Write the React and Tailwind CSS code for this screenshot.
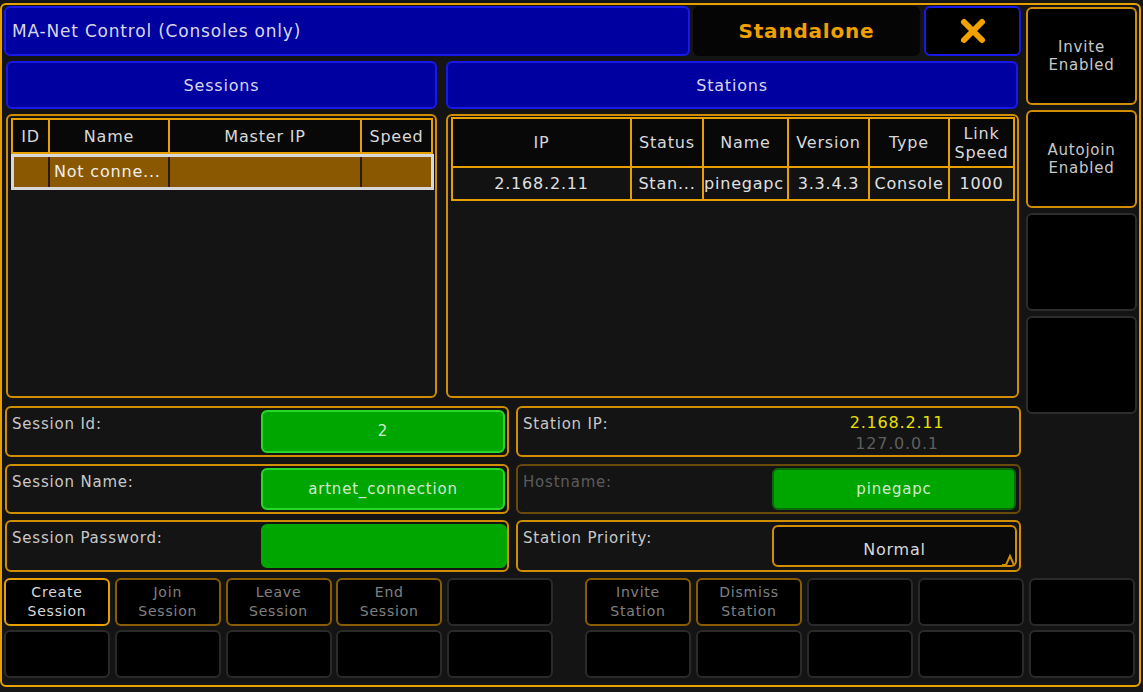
import { useState } from 'react'

const FONT = { fontFamily: '"DejaVu Sans", "Liberation Sans", sans-serif' }

// ── small building blocks ──────────────────────────────────────
function BlueBar({ children, className = '' }) {
  return (
    <div className={`bg-[#0000a0] border-2 border-[#1818e8] rounded-md flex items-center text-[#d8d8e8] text-[16px] ${className}`}>
      {children}
    </div>
  )
}

function SideButton({ lines, active }) {
  return (
    <div className={`h-[98px] rounded-md bg-black border-2 flex flex-col items-center justify-center text-[15px] leading-[18px] text-[#c8c8c8] ${active ? 'border-[#d08e00]' : 'border-[#2c2c2c]'}`}>
      {lines.map(l => <span key={l}>{l}</span>)}
    </div>
  )
}

function KeyButton({ lines, state }) {
  const border = state === 'on'  ? 'border-[#e8a000] text-[#d8d8d8]' :
                 state === 'dim' ? 'border-[#8a5c00] text-[#808080]' : 'border-[#2a2a2a]'
  return (
    <div className={`w-[106px] h-[48px] rounded-md bg-black border-2 flex flex-col items-center justify-center text-[14px] leading-[19px] ${border}`}>
      {lines && lines.map(l => <span key={l}>{l}</span>)}
    </div>
  )
}

function FieldRow({ label, dim, children, className = '' }) {
  return (
    <div className={`rounded-md border-2 bg-[#141414] flex ${dim ? 'border-[#6a4a08]' : 'border-[#d08e00]'} ${className}`}>
      <div className={`flex-1 pl-[5px] pt-[5px] text-[15px] ${dim ? 'text-[#5c5c5c]' : 'text-[#c8c8c8]'}`}>{label}</div>
      {children}
    </div>
  )
}

function GreenField({ children, variant = 'on', className = '' }) {
  const b = variant === 'on' ? 'border-[#28d828]' : variant === 'dark' ? 'border-[#0a6a0a]' : 'border-[#00a800]'
  return (
    <div className={`bg-[#00a600] border-2 ${b} rounded-md flex items-center justify-center text-[15px] text-[#d0ecd0] ${className}`}>
      {children}
    </div>
  )
}

// ── tables ──────────────────────────────────────────────────────
const HEAD = 'bg-[#080808] border-2 border-[#e8a000] flex items-center justify-center text-[#d8d8d8] text-[16px] leading-[19px] text-center'
const CELL = 'bg-[#121212] border-2 border-[#e8a000] flex items-center justify-center text-[#e0e0e0] text-[16px] whitespace-nowrap overflow-hidden'

function SessionsTable() {
  const cols = [
    { t: 'ID', w: 'w-[39px]' },
    { t: 'Name', w: 'w-[122px]' },
    { t: 'Master IP', w: 'w-[194px]' },
    { t: 'Speed', w: 'w-[73px]' },
  ]
  return (
    <div className="w-[431px] h-[284px] rounded-md border-2 border-[#d08e00] bg-[#141414] pt-[2px] pl-[3px]">
      <div className="flex h-[36px]">
        {cols.map((c, i) => (
          <div key={c.t} className={`${HEAD} ${c.w} ${i > 0 ? '-ml-[2px]' : ''}`}>{c.t}</div>
        ))}
      </div>
      <div className="w-[423px] h-[36px] border-[3px] border-[#d8d8d8] bg-[#8a5800] flex text-[16px] text-[#eeeeee]">
        <div className="w-[36px] border-r-2 border-[#2a1a00]" />
        <div className="w-[120px] border-r-2 border-[#2a1a00] pl-[4px] flex items-center">Not conne...</div>
        <div className="w-[192px] border-r-2 border-[#2a1a00]" />
        <div className="flex-1" />
      </div>
    </div>
  )
}

function StationsTable() {
  const cols = [
    { h: ['IP'], v: '2.168.2.11', w: 'w-[181px]' },
    { h: ['Status'], v: 'Stan...', w: 'w-[74px]' },
    { h: ['Name'], v: 'pinegapc', w: 'w-[87px]', left: true },
    { h: ['Version'], v: '3.3.4.3', w: 'w-[83px]' },
    { h: ['Type'], v: 'Console', w: 'w-[82px]' },
    { h: ['Link', 'Speed'], v: '1000', w: 'w-[67px]' },
  ]
  return (
    <div className="w-[573px] h-[284px] rounded-md border-2 border-[#d08e00] bg-[#141414] pt-[1px] pl-[3px]">
      <div className="flex h-[51px]">
        {cols.map((c, i) => (
          <div key={c.v} className={`${HEAD} flex-col ${c.w} ${i > 0 ? '-ml-[2px]' : ''}`}>
            {c.h.map(x => <span key={x}>{x}</span>)}
          </div>
        ))}
      </div>
      <div className="flex h-[35px] -mt-[2px]">
        {cols.map((c, i) => (
          <div key={c.v} className={`${CELL} ${c.w} ${i > 0 ? '-ml-[2px]' : ''} ${c.left ? 'justify-start' : ''}`}>{c.v}</div>
        ))}
      </div>
    </div>
  )
}

export default function App() {
  const [priority] = useState('Normal')

  return (
    <div className="w-[1143px] h-[692px] bg-[#161616] pt-[3px] overflow-hidden tracking-[0.8px]" style={FONT}>
      <div className="w-[1141px] h-[684px] border-2 border-[#e8a000] rounded-md bg-[#141414] pl-[2px] pt-[1px]">

        {/* ── Upper area ───────────────────────────────────── */}
        <div className="flex gap-[5px]">
          <div className="w-[1017px] flex flex-col">
            {/* title row */}
            <div className="flex h-[50px]">
              <BlueBar className="w-[686px] pl-[6px] pt-[2px] text-[17px]">MA-Net Control (Consoles only)</BlueBar>
              <div className="w-[227px] ml-[3px] bg-[#050505] rounded-md flex items-center justify-center text-[#f0a000] text-[20px] font-bold tracking-[0.8px]">
                Standalone
              </div>
              <div className="w-[97px] ml-[4px] bg-black border-2 border-[#1818e8] rounded-md flex items-center justify-center">
                <svg width="28" height="28" viewBox="0 0 28 28">
                  <path d="M5 5 L23 23 M23 5 L5 23" stroke="#f2a200" strokeWidth="6" strokeLinecap="round" />
                </svg>
              </div>
            </div>

            {/* headers */}
            <div className="flex h-[48px] mt-[5px] pl-[2px] gap-[9px]">
              <BlueBar className="w-[431px] justify-center pt-[2px]">Sessions</BlueBar>
              <BlueBar className="w-[572px] justify-center pt-[2px]">Stations</BlueBar>
            </div>

            {/* tables */}
            <div className="flex mt-[5px] pl-[2px] gap-[9px]">
              <SessionsTable />
              <StationsTable />
            </div>

            {/* fields */}
            <div className="grid grid-cols-[504px_505px] gap-x-[7px] mt-[8px] pl-[1px]">
              <FieldRow label="Session Id:" className="h-[51px]">
                <GreenField className="w-[244px] my-[2px] mr-[2px]">2</GreenField>
              </FieldRow>
              <FieldRow label="Station IP:" className="h-[51px]">
                <div className="w-[244px] flex flex-col items-center pt-[4px] text-[16px] leading-[21px]">
                  <span className="text-[#e8e000]">2.168.2.11</span>
                  <span className="text-[#5e5e5e]">127.0.0.1</span>
                </div>
              </FieldRow>

              <FieldRow label="Session Name:" className="h-[50px] mt-[7px]">
                <GreenField className="w-[244px] my-[2px] mr-[2px]">artnet_connection</GreenField>
              </FieldRow>
              <FieldRow label="Hostname:" dim className="h-[50px] mt-[7px]">
                <GreenField variant="dark" className="w-[244px] my-[2px] mr-[3px]">pinegapc</GreenField>
              </FieldRow>

              <FieldRow label="Session Password:" className="h-[52px] mt-[6px]">
                <GreenField variant="flat" className="w-[246px] my-[2px] mr-0" />
              </FieldRow>
              <FieldRow label="Station Priority:" className="h-[52px] mt-[6px]">
                <div className="relative w-[245px] my-[3px] mr-[2px] bg-[#0a0a0a] border-2 border-[#d08e00] rounded-md flex items-end justify-center pb-[3px] text-[16px] text-[#d8d8d8]">
                  {priority}
                  <svg className="absolute right-[-2px] bottom-[-2px]" width="16" height="14" viewBox="0 0 16 14">
                    <path d="M1 12 L5 12 L9 3 L13 12 L14 12" fill="none" stroke="#d08e00" strokeWidth="2" />
                  </svg>
                </div>
              </FieldRow>
            </div>
          </div>

          {/* right column */}
          <div className="w-[111px] flex flex-col gap-[5px] pt-[1px]">
            <SideButton lines={['Invite', 'Enabled']} active />
            <SideButton lines={['Autojoin', 'Enabled']} active />
            <SideButton lines={[]} />
            <SideButton lines={[]} />
          </div>
        </div>

        {/* ── Bottom keys ───────────────────────────────────── */}
        <div className="flex flex-col gap-[4px] mt-[6px]">
          <div className="flex">
            <div className="flex gap-[4.75px]">
              <KeyButton lines={['Create', 'Session']} state="on" />
              <KeyButton lines={['Join', 'Session']} state="dim" />
              <KeyButton lines={['Leave', 'Session']} state="dim" />
              <KeyButton lines={['End', 'Session']} state="dim" />
              <KeyButton />
            </div>
            <div className="flex gap-[5px] ml-[32px]">
              <KeyButton lines={['Invite', 'Station']} state="dim" />
              <KeyButton lines={['Dismiss', 'Station']} state="dim" />
              <KeyButton />
              <KeyButton />
              <KeyButton />
            </div>
          </div>
          <div className="flex">
            <div className="flex gap-[4.75px]">
              <KeyButton /><KeyButton /><KeyButton /><KeyButton /><KeyButton />
            </div>
            <div className="flex gap-[5px] ml-[32px]">
              <KeyButton /><KeyButton /><KeyButton /><KeyButton /><KeyButton />
            </div>
          </div>
        </div>
      </div>
    </div>
  )
}
